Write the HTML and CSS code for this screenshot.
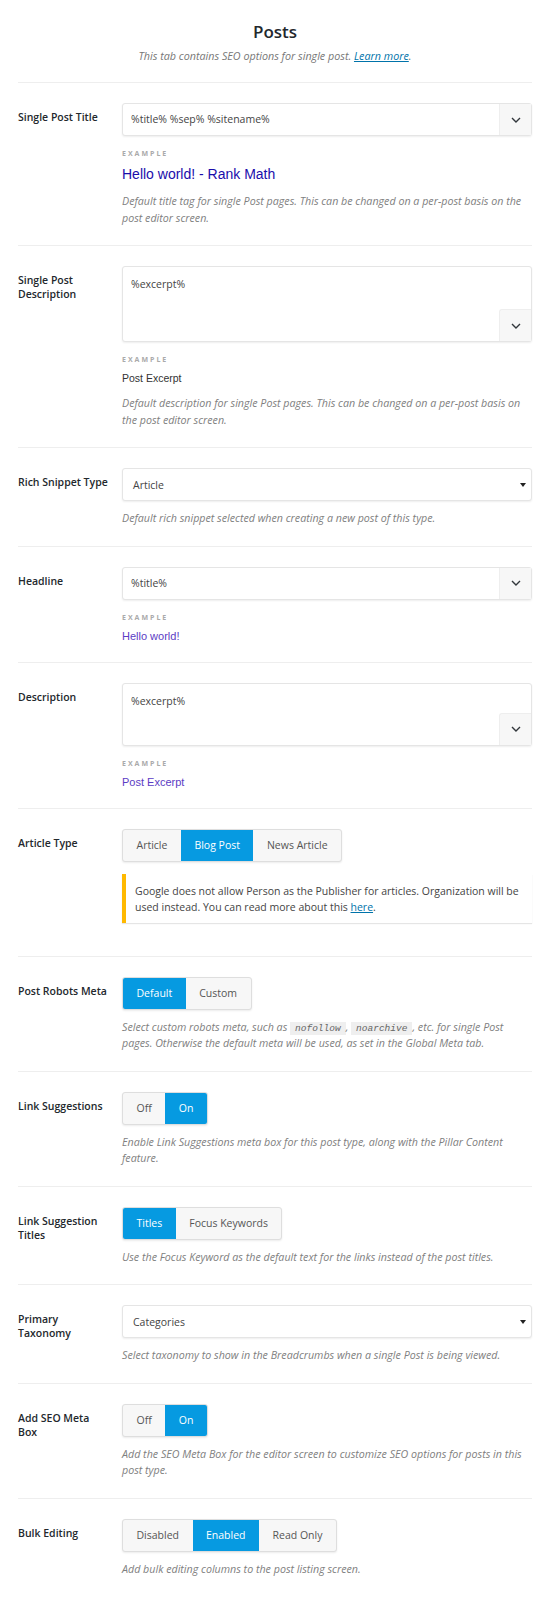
FILE: index.html
```html
<!doctype html>
<html>
<head>
<meta charset="utf-8">
<title>Posts</title>
<link rel="stylesheet" href="styles.css">
</head>
<body>

<div class="wrap">

<div class="tab-header">
<h2>Posts</h2>
<p>This tab contains SEO options for single post. <a href="#">Learn more</a>.</p>
</div>

<div class="row">
<div class="label">Single Post Title</div>
<div class="field">
<div class="input"><span class="value">%title% %sep% %sitename%</span><span class="vars"><svg width="10" height="6" viewBox="0 0 10 6"><polyline points="1,1 5,5 9,1" fill="none" stroke="#32373c" stroke-width="1.4"/></svg></span></div>
<div class="example">
<div class="example-label">Example</div>
<div class="example-value title">Hello world! - Rank Math</div>
</div>
<p class="desc">Default title tag for single Post pages. This can be changed on a per-post basis on the post editor screen.</p>
</div>
</div>

<div class="row">
<div class="label">Single Post Description</div>
<div class="field">
<div class="textarea tall"><span class="value">%excerpt%</span><span class="vars"><svg width="10" height="6" viewBox="0 0 10 6"><polyline points="1,1 5,5 9,1" fill="none" stroke="#32373c" stroke-width="1.4"/></svg></span></div>
<div class="example">
<div class="example-label">Example</div>
<div class="example-value plain">Post Excerpt</div>
</div>
<p class="desc">Default description for single Post pages. This can be changed on a per-post basis on the post editor screen.</p>
</div>
</div>

<div class="row">
<div class="label">Rich Snippet Type</div>
<div class="field">
<div class="select"><span>Article</span><span class="caret"></span></div>
<p class="desc">Default rich snippet selected when creating a new post of this type.</p>
</div>
</div>

<div class="row">
<div class="label">Headline</div>
<div class="field">
<div class="input"><span class="value">%title%</span><span class="vars"><svg width="10" height="6" viewBox="0 0 10 6"><polyline points="1,1 5,5 9,1" fill="none" stroke="#32373c" stroke-width="1.4"/></svg></span></div>
<div class="example">
<div class="example-label">Example</div>
<div class="example-value link">Hello world!</div>
</div>
</div>
</div>

<div class="row">
<div class="label">Description</div>
<div class="field">
<div class="textarea"><span class="value">%excerpt%</span><span class="vars"><svg width="10" height="6" viewBox="0 0 10 6"><polyline points="1,1 5,5 9,1" fill="none" stroke="#32373c" stroke-width="1.4"/></svg></span></div>
<div class="example">
<div class="example-label">Example</div>
<div class="example-value link">Post Excerpt</div>
</div>
</div>
</div>

<div class="row">
<div class="label">Article Type</div>
<div class="field">
<div class="toggle"><span>Article</span><span class="active">Blog Post</span><span>News Article</span></div>
<div class="notice">Google does not allow Person as the Publisher for articles. Organization will be used instead. You can read more about this <a href="#">here</a>.</div>
</div>
</div>

<div class="row">
<div class="label">Post Robots Meta</div>
<div class="field">
<div class="toggle"><span class="active">Default</span><span>Custom</span></div>
<p class="desc">Select custom robots meta, such as <code>nofollow</code>, <code>noarchive</code>, etc. for single Post pages. Otherwise the default meta will be used, as set in the Global Meta tab.</p>
</div>
</div>

<div class="row">
<div class="label">Link Suggestions</div>
<div class="field">
<div class="toggle"><span>Off</span><span class="active">On</span></div>
<p class="desc">Enable Link Suggestions meta box for this post type, along with the Pillar Content feature.</p>
</div>
</div>

<div class="row">
<div class="label">Link Suggestion Titles</div>
<div class="field">
<div class="toggle"><span class="active">Titles</span><span>Focus Keywords</span></div>
<p class="desc">Use the Focus Keyword as the default text for the links instead of the post titles.</p>
</div>
</div>

<div class="row">
<div class="label">Primary Taxonomy</div>
<div class="field">
<div class="select"><span>Categories</span><span class="caret"></span></div>
<p class="desc">Select taxonomy to show in the Breadcrumbs when a single Post is being viewed.</p>
</div>
</div>

<div class="row">
<div class="label">Add SEO Meta Box</div>
<div class="field">
<div class="toggle"><span>Off</span><span class="active">On</span></div>
<p class="desc">Add the SEO Meta Box for the editor screen to customize SEO options for posts in this post type.</p>
</div>
</div>

<div class="row">
<div class="label">Bulk Editing</div>
<div class="field">
<div class="toggle"><span>Disabled</span><span class="active">Enabled</span><span>Read Only</span></div>
<p class="desc">Add bulk editing columns to the post listing screen.</p>
</div>
</div>

</div>

</body>
</html>
```

FILE: styles.css
```css
* {box-sizing: border-box;}
body {margin: 0; font: 10.5px "Open Sans", sans-serif; color: #23282d; background: #fff;}
a {color: #0073aa;}
.wrap {padding: 0 21px 0 18px;}

.tab-header {text-align: center; padding: 21px 0 19px;}
.tab-header h2 {margin: 0; font-size: 17px; line-height: 22px; font-weight: 600;}
.tab-header p {margin: 6px 0 0; font-size: 10.75px; font-style: italic; line-height: 14px; color: #777;}

.row {display: grid; grid-template-columns: 104px 1fr; border-top: 1px solid #eee; padding: 20px 0 19px;}
.label {font-weight: 600; line-height: 14px; padding: 7px 12px 0 0;}

.input, .textarea, .select {background: #fff; border: 1px solid #e5e5e5; border-radius: 3px; box-shadow: 0 1px 2px rgba(0,0,0,.07); color: #444;}
.input {display: flex; height: 33px;}
.input .value {flex: 1; padding: 0 8px; line-height: 31px;}
.vars {width: 32px; display: flex; align-items: center; justify-content: center; background: #f7f7f7; border-left: 1px solid #eee;}
.textarea {display: flex; flex-direction: column; height: 63px;}
.textarea.tall {height: 76px;}
.textarea .value {padding: 10px 8px 0; line-height: 14px;}
.textarea .vars {margin-top: auto; align-self: flex-end; height: 32px; border-top: 1px solid #eee; border-top-left-radius: 3px;}
.select {display: flex; justify-content: space-between; align-items: center; height: 33px; padding: 0 5px 0 10px;}
.caret {border-left: 3px solid transparent; border-right: 3px solid transparent; border-top: 4px solid #222;}

.example {margin-top: 13px;}
.example-label {font-size: 7px; font-weight: 700; letter-spacing: 2px; line-height: 10px; color: #aaa; text-transform: uppercase;}
.example-value {margin-top: 6px; line-height: 14px; font-family: "Liberation Sans", Arial, sans-serif; font-size: 11px;}
.example-value.title {font-size: 14px; line-height: 18px; color: #1a0dab;}
.example-value.plain {font-size: 10.5px; color: #333;}
.example-value.link {color: #5b3cc4;}

.desc {margin: 9px 0 0; padding-right: 5px; font-size: 10.7px; font-style: italic; line-height: 16.5px; color: #808080;}
.example + .desc {margin-top: 10px;}
.desc code {display: inline-block; font-family: "Liberation Mono", monospace; font-size: 9.5px; line-height: 13px; background: #efefef; padding: 0 5px; color: #666;}

.toggle {display: inline-flex; border: 1px solid #dedede; border-radius: 3px; box-shadow: 0 1px 2px rgba(0,0,0,.08); background: #f7f7f7; overflow: hidden;}
.toggle span {padding: 0 13.5px; line-height: 31px; color: #555;}
.toggle .active {background: #069ae1; color: #fff;}

.notice {margin: 12px 0 14px; border-left: 4px solid #ffb900; background: #fff; box-shadow: 0 1px 1px rgba(0,0,0,.1); padding: 9px 12px 8px 9px; line-height: 16px; color: #444;}
```
